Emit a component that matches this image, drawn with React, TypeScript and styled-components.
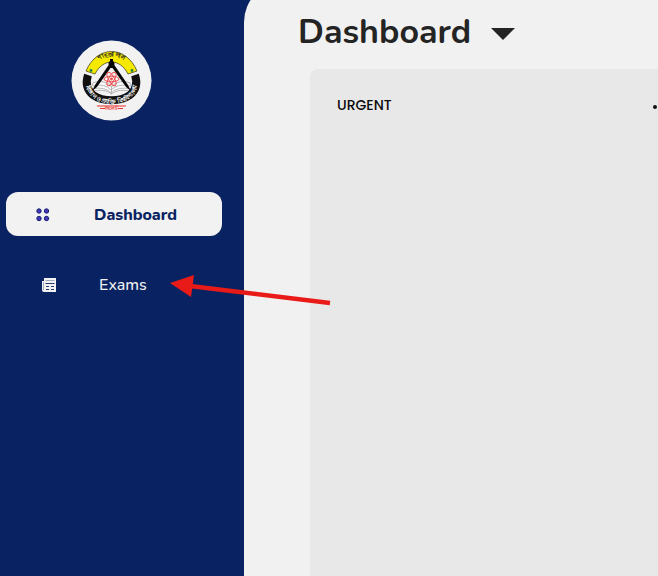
import React from "react";
import styled, { createGlobalStyle } from "styled-components";

const GlobalStyle = createGlobalStyle`
  * { box-sizing: border-box; }
  body { margin: 0; background: #092362; overflow: hidden; }
`;

const Shell = styled.div`
  position: relative;
  display: grid;
  grid-template-columns: 244px minmax(0, 1fr);
  height: 100vh;
  overflow: hidden;
  background: #092362;
  font-family: "Nunito", "Lato", sans-serif;
`;

const Sidebar = styled.aside`
  display: flex;
  flex-direction: column;
  padding: 40px 22px 0 6px;
`;

const Brand = styled.div`
  display: flex;
  padding-left: 65px;
  margin-bottom: 71px;
`;

const Nav = styled.nav`
  display: flex;
  flex-direction: column;
  gap: 26px;
`;

const NavLink = styled.a<{ $active?: boolean }>`
  display: grid;
  grid-template-columns: ${(p) => (p.$active ? "58px" : "57px")} auto;
  align-items: center;
  height: 44px;
  padding-top: 2px;
  padding-left: ${(p) => (p.$active ? "30px" : "36px")};
  border-radius: 12px;
  background: ${(p) => (p.$active ? "#f2f2f2" : "transparent")};
  color: ${(p) => (p.$active ? "#092362" : "#f2f2f2")};
  font-size: 16px;
  font-weight: ${(p) => (p.$active ? 800 : 500)};
  text-decoration: none;
`;

const Main = styled.main`
  display: flex;
  flex-direction: column;
  margin-top: -18px;
  padding: 26px 0 0 54px;
  border-top-left-radius: 40px;
  background: #f1f1f1;
`;

const Header = styled.header`
  display: flex;
  align-items: center;
  gap: 20px;
  height: 48px;
`;

const Title = styled.h1`
  margin: 0;
  color: #242424;
  font-size: 34px;
  font-weight: 700;
  line-height: 48px;
`;

const Toggle = styled.button`
  display: flex;
  padding: 4px 0 0;
  border: 0;
  background: none;
  color: #242424;
`;

const Panel = styled.section`
  display: flex;
  flex: 1;
  align-items: flex-start;
  justify-content: space-between;
  margin: 13px 0 0 12px;
  padding: 26px 0 0 27px;
  border-top-left-radius: 8px;
  background: #e8e8e8;
`;

const PanelTitle = styled.h2`
  margin: 0;
  color: #0b0b0b;
  font: 500 14px/20px "Poppins", "Inter", sans-serif;
`;

const More = styled.button`
  display: flex;
  width: 5px;
  padding: 10px 0 0;
  border: 0;
  overflow: hidden;
  background: none;
`;

const Arrow = styled.svg`
  position: absolute;
  left: 170px;
  top: 274px;
  pointer-events: none;
`;

const Emblem = () => (
  <svg width="81" height="81" viewBox="0 0 81 81" role="img" aria-label="University emblem">
    <defs>
      <path id="upper" d="M20 30 C29 12 52 12 61 30" />
      <path id="lower" d="M14.500 36 C14 47 16 53 21 57 C31 66 50 66 60 57 C65 53 67 47 66.500 36" />
    </defs>
    <circle cx="40.500" cy="40.500" r="40" fill="#f2f2f2" />
    <path d="M22 43 C29 40 37 42 40.500 47 C44 42 52 40 59 43 L62 52 C53 49 45 50 40.500 54 C36 50 28 49 19 52Z" fill="#fafafa" stroke="#888" strokeWidth=".6" />
    <path d="M22 46 Q34 43 40 50 Q47 43 59 46 M21 49 Q34 46 40 53 Q47 46 60 49 M40.500 47 V54" fill="none" stroke="#aaa" strokeWidth=".8" />
    <path d="M17 35 C14 44 16 50 22 55 C32 62 49 62 59 55 C65 50 67 44 64 35" fill="none" stroke="#111" strokeWidth="8" />
    <path d="M15 31 C26 5 55 5 66 31 L57 34 C49 18 32 18 24 34Z" fill="#f5e900" stroke="#323214" strokeWidth=".7" />
    <circle cx="20" cy="30.500" r="1.400" fill="#248246" />
    <circle cx="61" cy="30.500" r="1.400" fill="#248246" />
    <path d="M39 19 h3 v5 l2 2 L57 45 L60 51 L55 47 L41.500 28 H39.500 L26 47 L21 51 L24 45 L37 26 L39 24Z" fill="#080808" />
    <circle cx="40.500" cy="24" r="3" fill="#080808" />
    <g fill="none" stroke="#ee4c4c" strokeWidth="1">
      <ellipse cx="40.500" cy="39" rx="7.500" ry="2.800" />
      <ellipse cx="40.500" cy="39" rx="7.500" ry="2.800" transform="rotate(60 40.500 39)" />
      <ellipse cx="40.500" cy="39" rx="7.500" ry="2.800" transform="rotate(120 40.500 39)" />
    </g>
    <circle cx="40.500" cy="39" r="1.400" fill="#ee4c4c" />
    <text fill="#222" fontFamily="sans-serif" fontSize="6" fontWeight="700" textAnchor="middle"><textPath href="#upper" startOffset="50%">শাহজালাল</textPath></text>
    <text fill="#fff" fontFamily="sans-serif" fontSize="6" fontWeight="700" textAnchor="middle"><textPath href="#lower" startOffset="50%">বিজ্ঞান ও প্রযুক্তি বিশ্ববিদ্যালয়</textPath></text>
    <path d="M26 66 H55 M29 68.500 H34 M47 68.500 H52" stroke="#ed302d" strokeWidth="1.200" />
    <text x="40.500" y="70" fill="#ed302d" fontFamily="sans-serif" fontSize="5" fontWeight="700" textAnchor="middle">সিলেট</text>
  </svg>
);

const DotsIcon = () => (
  <svg width="14" height="14" viewBox="0 0 14 14" aria-hidden="true" fill="#4b35bc" stroke="#12236f" strokeWidth="1">
    <circle cx="3" cy="3" r="2.200" /><circle cx="10.500" cy="3" r="2.200" />
    <circle cx="3" cy="10.500" r="2.200" /><circle cx="10.500" cy="10.500" r="2.200" />
  </svg>
);

const PaperIcon = () => (
  <svg width="14" height="14" viewBox="0 0 14 14" aria-hidden="true">
    <path d="M2 0H14V14H2Q0 14 0 12V3H2Z" fill="#f2f2f2" />
    <path d="M3.500 2.500H12.500 M1.500 4V12" stroke="#8995b5" strokeWidth=".8" />
    <path d="M3.500 5.500H12.500" stroke="#243b73" strokeWidth="1" />
    <path d="M4 8.500H7M9 8.500H12M4 11.500H7M9 11.500H12" stroke="#243b73" strokeWidth="1" />
  </svg>
);

export default function App() {
  return (
    <>
      <GlobalStyle />
      <Shell>
        <Sidebar>
          <Brand><Emblem /></Brand>
          <Nav aria-label="Main">
            <NavLink href="#dashboard" $active aria-current="page"><DotsIcon />Dashboard</NavLink>
            <NavLink href="#exams"><PaperIcon />Exams</NavLink>
          </Nav>
        </Sidebar>
        <Main>
          <Header>
            <Title>Dashboard</Title>
            <Toggle aria-label="Choose view">
              <svg width="24" height="12" viewBox="0 0 24 12"><path d="M0 0H24L12 12Z" fill="currentColor" /></svg>
            </Toggle>
          </Header>
          <Panel>
            <PanelTitle>URGENT</PanelTitle>
            <More aria-label="More options">
              <svg width="5" height="5" viewBox="0 0 5 5"><circle cx="2" cy="2" r="2" fill="#111" /></svg>
            </More>
          </Panel>
        </Main>
        <Arrow width="162" height="34" viewBox="0 0 162 34" aria-hidden="true">
          <path d="M20 12 L160 29" stroke="#e91b18" strokeWidth="4.500" />
          <path d="M0 9 L24 1 L21 23Z" fill="#e91b18" />
        </Arrow>
      </Shell>
    </>
  );
}
